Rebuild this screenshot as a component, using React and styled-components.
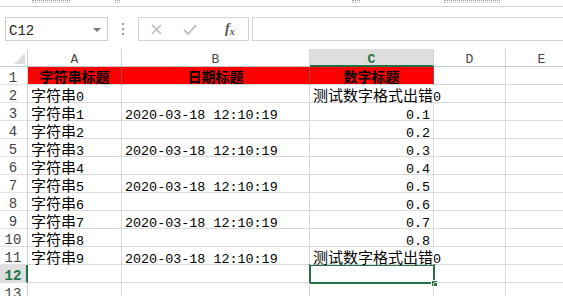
import React from "react";
import styled, { createGlobalStyle } from "styled-components";

const Global = createGlobalStyle`
  html, body { margin: 0; padding: 0; background: #fff; }
  body { width: 563px; height: 296px; overflow: hidden; font-family: "Liberation Mono", "Noto Sans CJK SC", monospace; }
`;

const Page = styled.div`
  width: 563px;
  height: 296px;
  overflow: hidden;
  background: #fff;
`;

const Ribbon = styled.div`
  height: 6px;
  border-bottom: 1px solid #d6d6d6;
  display: flex;
  align-items: flex-start;
`;

const RibbonMark = styled.span`
  margin-left: ${(p) => p.$ml}px;
  width: ${(p) => p.$w}px;
  height: 1px;
  border-top: 1px dotted #9a9a9a;
  border-bottom: 1px dotted #c4c4c4;
`;

const FormulaBar = styled.div`
  display: flex;
  align-items: center;
  height: 24px;
  margin-top: 10px;
  margin-bottom: 8px;
  padding-left: 5px;
`;

const NameBox = styled.div`
  box-sizing: border-box;
  width: 103px;
  height: 24px;
  border: 1px solid #cfcfcf;
  display: flex;
  align-items: center;
  justify-content: space-between;
  padding: 4px 6px 0 3px;
  font-family: "Liberation Mono", monospace;
  font-size: 14px;
  color: #262626;
`;

const Arrow = styled.span`
  width: 0;
  height: 0;
  margin-top: -3px;
  border-left: 4px solid transparent;
  border-right: 4px solid transparent;
  border-top: 4px solid #7a7a7a;
`;

const Grip = styled.div`
  width: 30px;
  display: flex;
  flex-direction: column;
  align-items: center;
  gap: 3px;
`;

const Dot = styled.span`
  width: 2px;
  height: 2px;
  background: #9a9a9a;
`;

const FxBox = styled.div`
  box-sizing: border-box;
  width: 111px;
  height: 24px;
  border: 1px solid #d4d4d4;
  display: flex;
  align-items: center;
`;

const FxButton = styled.span`
  margin-left: ${(p) => p.$ml}px;
  display: flex;
  align-items: center;
  justify-content: center;
`;

const Fx = styled.span`
  font-family: "Liberation Serif", serif;
  font-style: italic;
  font-weight: 700;
  font-size: 14px;
  color: #555;
  margin-left: 28px;
`;

const FxSub = styled.span`
  font-size: 10px;
  vertical-align: -2px;
`;

const Input = styled.div`
  box-sizing: border-box;
  flex: 1;
  height: 24px;
  margin-left: 3px;
  margin-right: -4px;
  border: 1px solid #d4d4d4;
`;

const Sheet = styled.div`
  display: grid;
  grid-template-columns: 28px 94px 188px 124px 72px 72px;
  grid-auto-rows: 18px;
  width: 578px;
`;

const Corner = styled.div`
  box-sizing: border-box;
  position: relative;
  border-right: 1px solid #d0d0d0;
  border-bottom: 1px solid #c6c6c6;
  &::after {
    content: "";
    position: absolute;
    right: 2px;
    bottom: 2px;
    width: 0;
    height: 0;
    border-left: 11px solid transparent;
    border-bottom: 11px solid #dcdcdc;
  }
`;

const ColHead = styled.div`
  box-sizing: border-box;
  border-right: 1px solid #d4d4d4;
  border-bottom: ${(p) => (p.$active ? "2px solid #217346" : "1px solid #c6c6c6")};
  background: ${(p) => (p.$active ? "#dedede" : "#fff")};
  color: ${(p) => (p.$active ? "#217346" : "#444")};
  font-family: "Liberation Mono", monospace;
  font-size: 13px;
  font-weight: ${(p) => (p.$active ? 700 : 400)};
  line-height: 14px;
  display: flex;
  align-items: center;
  justify-content: center;
  padding-top: ${(p) => (p.$active ? 6 : 5)}px;
`;

const RowHead = styled.div`
  box-sizing: border-box;
  border-right: ${(p) => (p.$active ? "2px solid #217346" : "1px solid #d0d0d0")};
  border-bottom: 1px solid #e2e2e2;
  background: ${(p) => (p.$active ? "#dedede" : "#fff")};
  color: ${(p) => (p.$active ? "#217346" : "#444")};
  font-family: "Liberation Mono", monospace;
  font-size: 14px;
  font-weight: ${(p) => (p.$active ? 700 : 400)};
  display: flex;
  align-items: flex-end;
  justify-content: center;
  line-height: 12px;
  padding-right: ${(p) => (p.$active ? 0 : 1)}px;
`;

const Cell = styled.div`
  box-sizing: border-box;
  position: relative;
  border-right: 1px solid ${(p) => (p.$hideRight ? "transparent" : p.$title ? "#a34848" : "#d9d9d9")};
  border-bottom: 1px solid #d9d9d9;
  background: ${(p) => (p.$title ? "#ff0000" : "transparent")};
  display: flex;
  align-items: flex-end;
  justify-content: ${(p) => (p.$title ? "center" : p.$right ? "flex-end" : "flex-start")};
  padding: 0 3px;
  white-space: nowrap;
  overflow: visible;
  font-family: "Liberation Mono", monospace;
  font-size: 13.4px;
  line-height: 16px;
  color: #000;
  z-index: ${(p) => (p.$hideRight ? 1 : 0)};
`;

const Content = styled.span`
  display: block;
  white-space: nowrap;
  line-height: 16px;
  margin-bottom: ${(p) => (p.$title ? -3 : -4)}px;
`;

const Han = styled.span`
  font-family: "Noto Sans CJK SC", sans-serif;
  font-size: ${(p) => (p.$bold ? 14 : 15)}px;
  font-weight: ${(p) => (p.$bold ? 700 : 400)};
`;

const Selection = styled.div`
  position: absolute;
  left: -1px;
  top: -1px;
  right: -2px;
  bottom: -2px;
  border: 2px solid #217346;
  pointer-events: none;
  z-index: 2;
  &::after {
    content: "";
    position: absolute;
    right: -5px;
    bottom: -5px;
    width: 5px;
    height: 5px;
    background: #217346;
    border: 1px solid #fff;
  }
`;

function Text({ value, bold }) {
  if (!value) return null;
  const parts = String(value).split(/([\u4e00-\u9fff]+)/).filter(Boolean);
  return (
    <Content $title={bold}>
      {parts.map((p, i) =>
        /[\u4e00-\u9fff]/.test(p) ? (
          <Han key={i} $bold={bold}>
            {p}
          </Han>
        ) : (
          <span key={i}>{p}</span>
        )
      )}
    </Content>
  );
}

const DATE = "2020-03-18 12:10:19";
const ERR = "测试数字格式出错0";

const rows = [
  { title: true, a: "字符串标题", b: "日期标题", c: "数字标题" },
  { a: "字符串0", b: "", c: ERR, overflow: true },
  { a: "字符串1", b: DATE, c: "0.1" },
  { a: "字符串2", b: "", c: "0.2" },
  { a: "字符串3", b: DATE, c: "0.3" },
  { a: "字符串4", b: "", c: "0.4" },
  { a: "字符串5", b: DATE, c: "0.5" },
  { a: "字符串6", b: "", c: "0.6" },
  { a: "字符串7", b: DATE, c: "0.7" },
  { a: "字符串8", b: "", c: "0.8" },
  { a: "字符串9", b: DATE, c: ERR, overflow: true },
  { a: "", b: "", c: "", selected: true },
  { a: "", b: "", c: "" },
];

export default function App() {
  return (
    <Page>
      <Global />
      <Ribbon>
        <RibbonMark $ml={32} $w={38} />
        <RibbonMark $ml={45} $w={5} />
        <RibbonMark $ml={232} $w={8} />
        <RibbonMark $ml={84} $w={56} />
      </Ribbon>
      <FormulaBar>
        <NameBox>
          <span>C12</span>
          <Arrow />
        </NameBox>
        <Grip>
          <Dot />
          <Dot />
          <Dot />
        </Grip>
        <FxBox>
          <FxButton $ml={12}>
            <svg width="11" height="11" viewBox="0 0 11 11">
              <path d="M1 1L10 10M10 1L1 10" stroke="#bdbdbd" strokeWidth="1.6" fill="none" />
            </svg>
          </FxButton>
          <FxButton $ml={21}>
            <svg width="14" height="11" viewBox="0 0 14 11">
              <path d="M1 6L5 10L13 1" stroke="#bdbdbd" strokeWidth="1.8" fill="none" />
            </svg>
          </FxButton>
          <Fx>
            f<FxSub>x</FxSub>
          </Fx>
        </FxBox>
        <Input />
      </FormulaBar>
      <Sheet>
        <Corner />
        <ColHead>A</ColHead>
        <ColHead>B</ColHead>
        <ColHead $active>C</ColHead>
        <ColHead>D</ColHead>
        <ColHead>E</ColHead>
        {rows.map((r, i) => (
          <React.Fragment key={i}>
            <RowHead $active={r.selected}>{i + 1}</RowHead>
            <Cell $title={r.title}>
              <Text value={r.a} bold={r.title} />
            </Cell>
            <Cell $title={r.title}>
              <Text value={r.b} bold={r.title} />
            </Cell>
            <Cell
              $title={r.title}
              $hideRight={r.overflow}
              $right={!r.title && !r.overflow && r.c !== ""}
            >
              <Text value={r.c} bold={r.title} />
              {r.selected && <Selection />}
            </Cell>
            <Cell />
            <Cell />
          </React.Fragment>
        ))}
      </Sheet>
    </Page>
  );
}
